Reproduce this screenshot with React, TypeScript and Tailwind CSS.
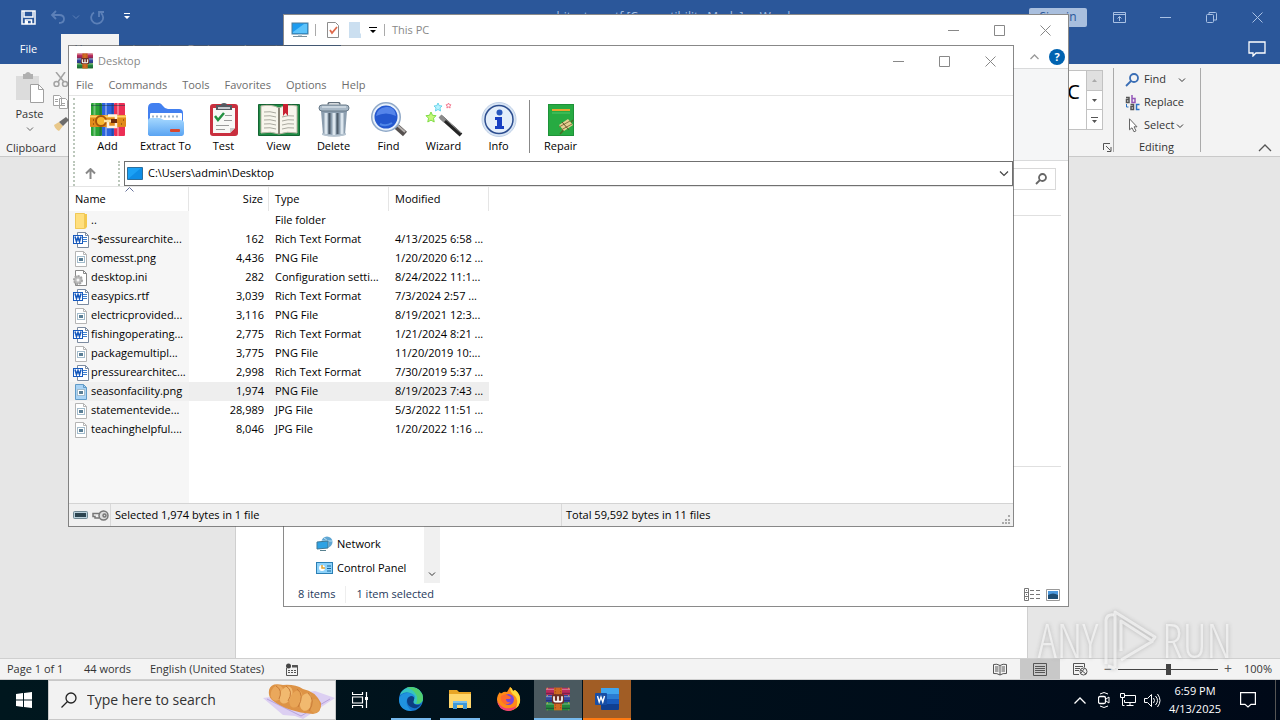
import type { ReactNode } from "react"
import { clsx } from "clsx"

type IconProps = { className?: string }
type Kind = "folder" | "rtf" | "image" | "ini"

type FileRow = {
    kind: Kind
    name: string
    size: string
    type: string
    modified: string
    selected?: boolean
}

const files: FileRow[] = [
    { kind: "folder", name: "..", size: "", type: "File folder", modified: "" },
    { kind: "rtf", name: "~$essurearchite...", size: "162", type: "Rich Text Format", modified: "4/13/2025 6:58 ..." },
    { kind: "image", name: "comesst.png", size: "4,436", type: "PNG File", modified: "1/20/2020 6:12 ..." },
    { kind: "ini", name: "desktop.ini", size: "282", type: "Configuration setti...", modified: "8/24/2022 11:1..." },
    { kind: "rtf", name: "easypics.rtf", size: "3,039", type: "Rich Text Format", modified: "7/3/2024 2:57 ..." },
    { kind: "image", name: "electricprovided...", size: "3,116", type: "PNG File", modified: "8/19/2021 12:3..." },
    { kind: "rtf", name: "fishingoperating...", size: "2,775", type: "Rich Text Format", modified: "1/21/2024 8:21 ..." },
    { kind: "image", name: "packagemultipl...", size: "3,775", type: "PNG File", modified: "11/20/2019 10:..." },
    { kind: "rtf", name: "pressurearchitec...", size: "2,998", type: "Rich Text Format", modified: "7/30/2019 5:37 ..." },
    { kind: "image", name: "seasonfacility.png", size: "1,974", type: "PNG File", modified: "8/19/2023 7:43 ...", selected: true },
    { kind: "image", name: "statementevide...", size: "28,989", type: "JPG File", modified: "5/3/2022 11:51 ..." },
    { kind: "image", name: "teachinghelpful....", size: "8,046", type: "JPG File", modified: "1/20/2022 1:16 ..." },
]

/* ---------- small shared icons ---------- */

const Chevron = ({ className }: IconProps) => (
    <svg className={className} width="8" height="6" viewBox="0 0 8 6" fill="none" stroke="currentColor">
        <path d="M1 1.500 4 4.500 7 1.500" />
    </svg>
)

const Minimize = () => (
    <svg width="11" height="11" viewBox="0 0 11 11" stroke="currentColor"><path d="M0 5.500h11" /></svg>
)
const Maximize = () => (
    <svg width="11" height="11" viewBox="0 0 11 11" fill="none" stroke="currentColor"><path d="M.5.5h10v10H.5z" /></svg>
)
const Restore = () => (
    <svg width="11" height="11" viewBox="0 0 11 11" fill="none" stroke="currentColor">
        <rect x=".5" y="2.500" width="7" height="8" rx="1" /><path d="M3 2V.5h6.500q1 0 1 1V8H8" />
    </svg>
)
const Close = () => (
    <svg width="11" height="11" viewBox="0 0 11 11" stroke="currentColor"><path d="m.5.5 10 10M10.500.5l-10 10" /></svg>
)

const WindowButtons = ({ restore }: { restore?: boolean }) => (
    <>
        <button aria-label="Minimize" className="grid h-full w-[46px] place-items-center"><Minimize /></button>
        <button aria-label="Maximize" className="grid h-full w-[46px] place-items-center">{restore ? <Restore /> : <Maximize />}</button>
        <button aria-label="Close" className="grid h-full w-[46px] place-items-center"><Close /></button>
    </>
)

const Monitor = () => (
    <svg width="18" height="16" viewBox="0 0 18 16">
        <rect x="1" y="1" width="16" height="11" fill="#1c9cf0" stroke="#4f7d99" />
        <path d="M2 10 13 2h3v9H2z" fill="#5cc3fb" />
        <path d="M7 12h4v2H7z" fill="#b7cbd6" /><path d="M2 14.500h14" stroke="#77909e" />
    </svg>
)

const WinRar = ({ size }: { size: number }) => (
    <svg width={size} height={size} viewBox="0 0 36 36">
        <rect y="1" width="36" height="11" rx="1" fill="#b92c5c" />
        <rect y="12" width="36" height="11" fill="#34489f" />
        <rect y="23" width="36" height="12" rx="1" fill="#23883c" />
        <path d="M0 3.500h36M0 14.500h36M0 25.500h36" stroke="#fff" strokeOpacity=".4" strokeWidth="1.500" />
        <path d="M0 9.500h36M0 20.500h36M0 32h36" stroke="#1d1238" strokeOpacity=".4" strokeWidth="2" />
        <path d="M2 1v34M34 1v34" stroke="#e4b94a" strokeOpacity=".7" strokeWidth="2" strokeDasharray="2 9" />
        <rect x="12" y="1" width="12" height="34" fill="#cf6a22" />
        <path d="M14 2v32M22 2v32" stroke="#893b13" strokeDasharray="2 2" />
        <rect x="9" y="11" width="18" height="14" rx="2" fill="#6e2f26" />
        <path d="M12 14v6q0 2 2 2h8q2 0 2-2v-6M18 14v7" fill="none" stroke="#fff" strokeWidth="2.500" />
    </svg>
)

const FileIcon = ({ kind, selected }: { kind: Kind; selected?: boolean }) => {
    if (kind === "folder") return (
        <svg width="18" height="18" viewBox="0 0 18 18">
            <path d="M3 1h9l1 1v15H3z" fill="#ffdf7e" /><path d="M13 2h2v13l-2 2z" fill="#f4c94e" />
            <path d="M3.500 1.500h9v15h-9z" fill="none" stroke="#efc858" />
        </svg>
    )
    if (kind === "rtf") return (
        <svg width="18" height="18" viewBox="0 0 18 18">
            <path d="M5.500 1.500h8l3 3v12h-11z" fill="#fff" stroke="#7c8ba0" /><path d="M13.500 1.500v3h3" fill="none" stroke="#7c8ba0" />
            <path d="M11 6.500h4M11 8.500h4M11 10.500h4" stroke="#3f7fcc" />
            <rect x="1.500" y="4.500" width="9" height="8" fill="#fff" stroke="#185abd" />
            <path d="m3 5.500 1.500 5L6 6.500l1.500 4 1.500-5" fill="none" stroke="#185abd" strokeWidth="1.600" />
        </svg>
    )
    if (kind === "ini") return (
        <svg width="18" height="18" viewBox="0 0 18 18">
            <path d="M3.500 1.500h8l3 3v12h-11z" fill="#fff" stroke="#878787" /><path d="M11.500 1.500v3h3" fill="none" stroke="#878787" />
            <circle cx="6" cy="11" r="4" fill="#bcbcbc" stroke="#a5a5a5" strokeDasharray="2 1" strokeWidth="2" />
            <circle cx="6" cy="11" r="1.500" fill="#f4f4f4" />
        </svg>
    )
    return (
        <svg width="18" height="18" viewBox="0 0 18 18">
            <path d="M3.500 1.500h8l3 3v12h-11z" fill={selected ? "#a9d3f5" : "#fff"} stroke={selected ? "#619bc7" : "#b5b5b5"} />
            <path d="M11.500 1.500v3h3" fill="none" stroke={selected ? "#619bc7" : "#b5b5b5"} />
            <rect x="5.500" y="6.500" width="7" height="6" fill="#fff" stroke="#a3bccc" />
            <rect x="7" y="8" width="4" height="3" fill="#5b7f96" />
        </svg>
    )
}

/* ---------- archive manager toolbar icons ---------- */

const AddIcon = () => (
    <svg width="36" height="36" viewBox="0 0 36 36">
        <rect x="1" y="1" width="11" height="33" rx="1" fill="#2aa336" />
        <rect x="12" y="1" width="12" height="33" fill="#2c63dd" />
        <rect x="24" y="1" width="11" height="33" rx="1" fill="#ec2f55" />
        <path d="M4.500 1v33M16 1v33M28 1v33" stroke="#fff" strokeOpacity=".35" strokeWidth="2" />
        <path d="M10.500 1v33M22.500 1v33" stroke="#10204a" strokeOpacity=".35" strokeWidth="2" />
        <path d="M1 3.500h11M12 3.500h12M24 3.500h11" stroke="#173a46" strokeOpacity=".5" />
        <rect y="13" width="36" height="12" rx="1" fill="#e08a1b" />
        <path d="M0 14.500h36" stroke="#ffd369" strokeWidth="2" />
        <path d="M3 18h.5M7 21h.5M3 22h.5M33 18h.5M31 22h.5" stroke="#6d3107" strokeWidth="2" />
        <circle cx="11" cy="19" r="5" fill="#f9b72f" stroke="#a75409" strokeWidth="2" />
        <path d="M18 13.500h8v4M26 21v4h-8v-5" fill="none" stroke="#fff3df" strokeWidth="2.500" />
        <path d="M14 19h11" stroke="#ffe3a2" strokeWidth="2.500" /><rect x="21" y="17" width="6" height="4" fill="#6b2c0c" />
    </svg>
)

const ExtractIcon = () => (
    <svg width="38" height="36" viewBox="0 0 38 36">
        <defs>
            <linearGradient id="pocket" x1="0" y1="0" x2="0" y2="1">
                <stop offset="0" stopColor="#a5d8ff" /><stop offset="1" stopColor="#5aa4f2" />
            </linearGradient>
        </defs>
        <path d="M1 6q0-5 5-5h6q2 0 4 3t5 3h11q4 0 4 4v20q0 3-3 3H4q-3 0-3-3z" fill="#4280f0" />
        <rect x="3" y="11" width="32" height="14" rx="1" fill="#fff" />
        <path d="M5 14.500h28" stroke="#9fb4c8" strokeWidth="2" strokeDasharray="2 2" />
        <path d="M1 19q0-3 3-3h9l4 2h16q4 0 4 3v10q0 3-3 3H4q-3 0-3-3z" fill="url(#pocket)" />
        <rect x="23" y="27" width="10" height="3" rx="1" fill="#d9472f" />
    </svg>
)

const TestIcon = () => (
    <svg width="30" height="36" viewBox="0 0 30 36">
        <rect x="1" y="2" width="28" height="32" rx="3" fill="#c92f3e" />
        <path d="M4 6h22v20l-5 5H4z" fill="#f8f8f6" /><path d="m26 26-5 5v-5z" fill="#c9c9c9" />
        <path d="M7 3h5q0-2 3-2t3 2h5v5H7z" fill="#555a61" /><path d="M9 6h12" stroke="#c7cbd0" strokeWidth="2" />
        <path d="m6 14 3 4 6-7" fill="none" stroke="#239141" strokeWidth="2.500" />
        <path d="M16 13.500h7M15 18.500h8M7 23.500h13M7 27.500h9" stroke="#9b9b9b" />
    </svg>
)

const ViewIcon = () => (
    <svg width="44" height="36" viewBox="0 0 44 36">
        <path d="M1.500 2.500h41v31h-41z" fill="#208a45" stroke="#146432" />
        <path d="M4 4q11-2 18 2v26q-8-3-18-1zM40 4q-11-2-18 2v26q8-3 18-1z" fill="#f7f5ec" stroke="#bdb8a6" />
        <path d="M22 6v26" stroke="#746f62" strokeWidth="1.500" />
        <path d="M7 10q6-1 12 1M7 14q6-1 12 1M7 18q6-1 12 1M7 22q6-1 12 1M7 26q6-1 12 1M25 15q6-2 12-1M25 19q6-2 12-1M25 23q6-2 12-1M25 27q6-2 12-1" fill="none" stroke="#aaa99f" />
        <path d="M26 2h5v12l-2.500-3-2.500 3z" fill="#c82031" />
    </svg>
)

const DeleteIcon = () => (
    <svg width="34" height="36" viewBox="0 0 34 36">
        <path d="M11 2.500q0-2 2-2h8q2 0 2 2" fill="none" stroke="#626f7b" strokeWidth="1.500" />
        <path d="M4 9h26l-2 24q-11 3-22 0z" fill="#8c9eaf" />
        <path d="M9 11v21M17 11v22M25 11v21" stroke="#dce6ee" strokeWidth="3" />
        <path d="M12.500 11v21M20.500 11v21" stroke="#4e5d6b" strokeWidth="2" />
        <path d="M5 31q12 4 24 0v2q-12 3-24 0z" fill="#b7c5d1" />
        <rect x="2" y="3" width="30" height="6" rx="3" fill="#a9b9c7" stroke="#667887" /><path d="M5 5h24" stroke="#e9f0f5" />
    </svg>
)

const FindIcon = () => (
    <svg width="38" height="36" viewBox="0 0 38 36">
        <path d="m26 24 9 8" stroke="#55504f" strokeWidth="6" /><path d="m27 23 8 7" stroke="#b5b0ae" strokeWidth="2" />
        <circle cx="16" cy="15" r="14" fill="#2458cf" stroke="#90a9c8" strokeWidth="2" />
        <circle cx="16" cy="15" r="12.500" fill="none" stroke="#e8f1fb" strokeWidth="2" />
        <path d="M6 14q1-8 10-9t10 9q-10-5-20 0z" fill="#5585ea" /><path d="M10 22q6 3 12-1" fill="none" stroke="#4f86e7" strokeWidth="2" />
    </svg>
)

const star = "m5 0 1.500 3.300L10 3.700 7.500 6.200 8.200 10 5 8.100 1.800 10l.7-3.800L0 3.700l3.500-.4z"

const WizardIcon = () => (
    <svg width="38" height="36" viewBox="0 0 38 36">
        <path d="m16 15 20 18" stroke="#252525" strokeWidth="4" /><path d="m15 14 5 5" stroke="#8b8b8b" strokeWidth="4" />
        <path d="m17 14 19 17" stroke="#8c8c8c" />
        <path d={star} transform="translate(1 10)" fill="#c6f87c" stroke="#7fdc45" />
        <path d={star} transform="translate(9 1) scale(.8)" fill="#b7f3ff" stroke="#4fcbe6" />
        <path d={star} transform="translate(21 1) scale(.5)" fill="#fff" stroke="#f4788f" strokeWidth="2" />
    </svg>
)

const InfoIcon = () => (
    <svg width="36" height="36" viewBox="0 0 36 36">
        <circle cx="18" cy="17.500" r="17" fill="#d8e5f5" stroke="#c0d0e6" /><circle cx="18" cy="17.500" r="14" fill="#e4eefa" stroke="#2c4d8f" strokeWidth="1.500" />
        <circle cx="18.500" cy="10.500" r="3" fill="#2857bd" />
        <path d="M14 15h7v9h2v3h-9v-3h2v-6h-2z" fill="#183fc2" />
    </svg>
)

const RepairIcon = () => (
    <svg width="28" height="36" viewBox="0 0 28 36">
        <rect x="1.500" y="2.500" width="25" height="31" fill="#27ab42" stroke="#1e9238" /><path d="M5 8h18" stroke="#e9a52d" strokeWidth="2" />
        <path d="M5 11h18" stroke="#53c767" />
        <path d="m26 18-13 14" stroke="#4b6a25" strokeWidth="1.500" />
        <path d="m12 23 9-6 5 6-9 6z" fill="#e5cf91" /><path d="m12 25 11-6M14 28l11-6" stroke="#8b7240" /><path d="m15 20 7 8" stroke="#604f28" />
    </svg>
)

type ToolProps = { label: string; icon: ReactNode; wide?: boolean }

const tools: ToolProps[] = [
    { label: "Add", icon: <AddIcon /> },
    { label: "Extract To", icon: <ExtractIcon />, wide: true },
    { label: "Test", icon: <TestIcon /> },
    { label: "View", icon: <ViewIcon /> },
    { label: "Delete", icon: <DeleteIcon /> },
    { label: "Find", icon: <FindIcon /> },
    { label: "Wizard", icon: <WizardIcon /> },
    { label: "Info", icon: <InfoIcon /> },
]

const Tool = ({ label, icon, wide }: ToolProps) => (
    <button className={clsx("flex flex-col items-center text-black", wide ? "w-[61px]" : "w-[55px]")}>
        {icon}
        <span className="leading-4 whitespace-nowrap">{label}</span>
    </button>
)

/* ---------- Word ---------- */

const WordTitleBar = () => (
    <header className="flex h-[34px] shrink-0 items-center bg-[#2b579a] text-[#a9c1e4]">
        <div className="flex flex-1 items-center">
            <button aria-label="Save" className="ml-[21px] text-white">
                <svg width="15" height="15" viewBox="0 0 15 15" fill="none" stroke="currentColor" strokeWidth="1.500">
                    <path d="M1 1h13v13H1zM3 1v6h9V1M4.500 14v-4h6v4" /><path d="M5 11h2v3H5z" fill="currentColor" stroke="none" />
                </svg>
            </button>
            <button aria-label="Undo" className="ml-3.5 flex items-center gap-1.5 text-[#5c80b8]">
                <svg width="16" height="14" viewBox="0 0 16 14" fill="none" stroke="currentColor" strokeWidth="1.800"><path d="M6 1 2 5l4 4M2 5h7q5 0 5 4t-5 4" /></svg>
                <Chevron />
            </button>
            <button aria-label="Redo" className="ml-2.5 text-[#5c80b8]">
                <svg width="15" height="15" viewBox="0 0 15 15" fill="none" stroke="currentColor" strokeWidth="1.800"><path d="M4 2.500A6 6 0 1 0 11 3M9 7V2h5" /></svg>
            </button>
            <button aria-label="Customize toolbar" className="ml-[18px] text-white">
                <svg width="8" height="8" viewBox="0 0 8 8" fill="currentColor"><path d="M1 0h6v1H1zM1 3h6L4 6z" /></svg>
            </button>
        </div>
        <h1 className="text-xs whitespace-pre">pressurearchitecture.rtf [Compatibility Mode]  -  Word</h1>
        <div className="flex h-full flex-1 items-center justify-end">
            <button className="flex h-[19px] w-[58px] items-center justify-center rounded-xs bg-[#a9bfde] text-xs text-[#2b579a]">Sign in</button>
            <button aria-label="Ribbon display options" className="ml-[9px] grid h-full w-[46px] place-items-center">
                <svg width="13" height="11" viewBox="0 0 13 11" fill="none" stroke="currentColor"><path d="M.5.5h12v10H.5zM1 2.500h11M6.500 9V4.500M4.500 6.500l2-2 2 2" /></svg>
            </button>
            <WindowButtons restore />
        </div>
    </header>
)

const WordTabs = () => (
    <nav className="flex h-[30px] shrink-0 items-center bg-[#2b579a] text-white">
        <button className="w-[61px] pr-1">File</button>
        <button className="h-full w-[58px] bg-[#f3f3f3] text-[#2b579a]">Home</button>
        <button className="w-[56px]">Insert</button>
        <button className="w-[60px]">Design</button>
        <button className="w-[52px]">Layout</button>
        <button aria-label="Comments" className="mr-[14px] ml-auto">
            <svg width="18" height="16" viewBox="0 0 18 16" fill="none" stroke="currentColor" strokeWidth="1.300"><path d="M1 1h16v11H8l-3 3v-3H1z" /></svg>
        </button>
    </nav>
)

const WordRibbon = () => (
    <section className="flex h-[93px] shrink-0 border-b border-[#c9c9c9] bg-[#f3f3f3] text-[#333]">
        <div className="flex w-[72px] flex-col pt-2">
            <div className="flex flex-1">
                <button className="flex w-[51px] flex-col items-center pl-2">
                    <svg width="28" height="32" viewBox="0 0 28 32">
                        <path d="M0 4h23v24H0z" fill="#dcdcdc" /><path d="M7 2h2q3-4 6 0h2v5H7z" fill="#b0b0b0" />
                        <path d="M14.500 12.500h8l5 5v13h-13z" fill="#fff" stroke="#a0a0a0" /><path d="M22.500 12.500v5h5" fill="none" stroke="#a0a0a0" />
                    </svg>
                    <span className="mt-0.5 mb-1 leading-4">Paste</span>
                    <Chevron className="text-[#666]" />
                </button>
                <div className="flex flex-col gap-2 pl-0.5">
                    <svg width="16" height="15" viewBox="0 0 16 15" fill="none" stroke="#a3a3a3" strokeWidth="1.500"><path d="m3 0 8 10M12 0 5 10" /><circle cx="3.500" cy="12" r="2.500" /><circle cx="12" cy="12" r="2.500" /></svg>
                    <svg width="16" height="14" viewBox="0 0 16 14" fill="#fff" stroke="#a3a3a3"><path d="M.5.5h6l2 2v8h-8zM6.500 3.500h6l2 2v8h-8zM2 4.500h3M2 6.500h3M8 8.500h4M8 10.500h4" /></svg>
                    <svg width="16" height="14" viewBox="0 0 16 14"><path d="m1 8 5-3 4 4-4 5q-4-2-5-6z" fill="#e9c88a" /><path d="m6 5 4 4 6-6-3-3z" fill="#6d6d6d" /></svg>
                </div>
            </div>
            <span className="pl-1.5 leading-4">Clipboard</span>
        </div>
        <div className="ml-auto flex w-[214px]">
            <div className="w-[37px] pt-1.5">
                <div className="flex h-[60px] border border-l-0 border-[#c2c2c2] bg-white">
                    <span className="flex flex-1 items-center justify-end pr-1.5 pb-4 font-['Noto_Sans'] text-xl text-black">C</span>
                    <div className="flex w-4 flex-col divide-y divide-[#c2c2c2] border-l border-[#c2c2c2] text-[#555]">
                        <button aria-label="Previous style" className="grid flex-1 place-items-center bg-[#e0e0e0] text-[#aaa]"><svg width="5" height="3" fill="currentColor"><path d="M0 3h5L2.500 0z" /></svg></button>
                        <button aria-label="Next style" className="grid flex-1 place-items-center"><svg width="5" height="3" fill="currentColor"><path d="M0 0h5L2.500 3z" /></svg></button>
                        <button aria-label="More styles" className="grid flex-1 place-items-center"><svg width="7" height="6" fill="currentColor"><path d="M0 0h7v1H0zM1 3h5L3.500 6z" /></svg></button>
                    </div>
                </div>
            </div>
            <button aria-label="Styles settings" className="mr-px mb-1 self-end">
                <svg width="9" height="9" viewBox="0 0 9 9" fill="none" stroke="#555"><path d="M.5 7V.5H7M3 3l4.500 4.500M8 4v4.500H4" /></svg>
            </button>
            <div className="my-1 flex w-[88px] flex-col border-x border-[#aaa] pl-[11px]">
                <button className="flex h-[23px] shrink-0 items-center gap-1">
                    <svg width="15" height="14" viewBox="0 0 15 14" fill="none" stroke="#3a6eb5" strokeWidth="1.800"><circle cx="9" cy="5" r="4" /><path d="m6 8-5 5" /></svg>
                    Find <Chevron className="ml-2" />
                </button>
                <button className="flex h-[23px] shrink-0 items-center gap-1">
                    <svg width="15" height="16" viewBox="0 0 15 16" fill="none" strokeWidth="1.500">
                        <path d="M1 2.500h3v5H1.500v-3H4" stroke="#555" /><path d="M7 0v7.500h3v-4H7" stroke="#9457b8" />
                        <path d="M5.500 9.500h3v5H6v-3h2.500" stroke="#555" /><path d="M14.500 9.500h-3v5h3" stroke="#2b72c4" /><path d="M1.500 9v3h2" stroke="#2b72c4" strokeWidth="1" />
                    </svg>
                    Replace
                </button>
                <button className="flex h-[23px] shrink-0 items-center gap-1">
                    <svg width="15" height="15" viewBox="0 0 15 15" fill="#fff" stroke="#666"><path d="M4.500.8v11l2.500-2 2 4 2-1-2-4h3z" /></svg>
                    Select <Chevron className="-ml-0.5" />
                </button>
                <span className="pr-3 text-center leading-5">Editing</span>
            </div>
            <button aria-label="Collapse ribbon" className="mr-2 mb-1 ml-auto self-end">
                <svg width="14" height="9" viewBox="0 0 14 9" fill="none" stroke="#555" strokeWidth="1.300"><path d="m1 8 6-6 6 6" /></svg>
            </button>
        </div>
    </section>
)

const WordStatus = () => (
    <footer className="flex h-[22px] shrink-0 items-center border-y border-[#cfcfcf] bg-[#f3f3f3] text-[#333]">
        <span className="w-[77px] pl-[7px]">Page 1 of 1</span>
        <span className="w-[66px] pl-[7px]">44 words</span>
        <span className="w-[142px] pl-[7px]">English (United States)</span>
        <svg width="14" height="13" viewBox="0 0 14 13" fill="none" stroke="#555"><path d="M1.500 5v7.500h11V2.500H7" /><path d="M7 3.500h6" strokeWidth="2" /><path d="M3 7.500h8M3 9.500h8" strokeDasharray="2 1" /><circle cx="3.500" cy="3" r="2.500" fill="#444" stroke="none" /></svg>
        <div className="ml-auto flex h-full items-center text-[#555]">
            <button aria-label="Read mode" className="grid w-10 place-items-center">
                <svg width="14" height="13" viewBox="0 0 14 13" fill="none" stroke="currentColor"><path d="M7 2.500Q4 .5.5 1.500v9q3.500-.5 6.500 1.500 3-2 6.500-1.500v-9Q10 .5 7 2.500zV12M2 4h3.500M2 6h3.500M2 8h3.500M8.500 4H12M8.500 6H12M8.500 8H12" /></svg>
            </button>
            <button aria-label="Print layout" className="grid h-full w-10 place-items-center bg-[#c8c8c8]">
                <svg width="14" height="13" viewBox="0 0 14 13" fill="none" stroke="currentColor"><path d="M.5.5h13v12H.5zM2 3.500h10M2 5.500h10M2 7.500h10M2 9.500h10" /></svg>
            </button>
            <button aria-label="Web layout" className="grid w-10 place-items-center">
                <svg width="15" height="13" viewBox="0 0 15 13" fill="none" stroke="currentColor"><path d="M6 11.500H.5V.5h11v4M2 3.500h8M2 5.500h5M2 7.500h4" /><circle cx="10.500" cy="8.500" r="3.500" /><path d="m8 7 5 4M8 10l3-4" /></svg>
            </button>
            <button aria-label="Zoom out" className="ml-0.5 w-3 text-sm leading-3">−</button>
            <input
                type="range"
                aria-label="Zoom"
                defaultValue={50}
                className="mx-1 h-4 w-[100px] appearance-none bg-[linear-gradient(#444,#444)] bg-[length:100%_1px] bg-center bg-no-repeat [&::-webkit-slider-thumb]:h-[11px] [&::-webkit-slider-thumb]:w-[5px] [&::-webkit-slider-thumb]:appearance-none [&::-webkit-slider-thumb]:bg-[#444]"
            />
            <button aria-label="Zoom in" className="w-3 text-sm leading-3">+</button>
            <span className="w-[46px] pr-2 text-right text-[#333]">100%</span>
        </div>
    </footer>
)

/* ---------- File Explorer ---------- */

const Explorer = () => (
    <section className="absolute top-3.5 right-[211px] bottom-[73px] left-[283px] flex flex-col border border-[#8a8a8a] bg-white text-black">
        <header className="flex h-[30px] shrink-0 items-center pl-[7px] text-[#888]">
            <Monitor />
            <span className="mr-2 ml-1.5 h-3 w-px bg-[#aaa]" />
            <svg className="ml-0.5" width="14" height="16" viewBox="0 0 14 16" fill="#fff" stroke="#8d8d8d"><path d="M1.500.5h8l3 3v12h-11z" /><path d="m4 8 2 3 5-6" fill="none" stroke="#df6a4c" strokeWidth="1.800" /></svg>
            <svg className="ml-2" width="14" height="16" viewBox="0 0 14 16"><path d="M1 0h11v11l1 1v4H1z" fill="#cbdff0" /></svg>
            <svg className="ml-[7px]" width="8" height="7" viewBox="0 0 8 7"><path d="M0 0h8v1H0zM1 3h6L4 6z" fill="#000" /></svg>
            <span className="mx-[7px] h-3 w-px bg-[#aaa]" />
            <span>This PC</span>
            <div className="ml-auto flex h-full"><WindowButtons /></div>
        </header>
        <nav className="flex h-[24px] shrink-0 items-center border-b border-[#d9dadb] pr-[3px]">
            <button className="h-full w-[57px] bg-[#1a5fb4] text-white">File</button>
            <button aria-label="Expand ribbon" className="ml-auto text-[#999]">
                <svg width="9" height="6" viewBox="0 0 9 6" fill="none" stroke="currentColor" strokeWidth="1.300"><path d="m.5 5 4-4 4 4" /></svg>
            </button>
            <button aria-label="Help" className="ml-2.5 grid size-4 place-items-center rounded-full bg-[#0063b1] font-bold text-white">?</button>
        </nav>
        <div className="h-[92px] shrink-0 border-b border-[#d9dadb] bg-[#f5f6f7]" />
        <div className="flex h-[35px] shrink-0 items-center justify-end pr-3">
            <label className="flex h-[22px] w-[150px] items-center border border-[#d9d9d9] pr-2">
                <input aria-label="Search This PC" className="min-w-0 flex-1 outline-none" />
                <svg width="12" height="12" viewBox="0 0 12 12" fill="none" stroke="#666" strokeWidth="1.800"><circle cx="7.500" cy="4.500" r="3.500" /><path d="m5 7-4 4" /></svg>
            </label>
        </div>
        <div className="flex min-h-0 flex-1">
            <ul className="flex w-[140px] flex-col justify-end pb-[3px] pl-8">
                <li className="flex h-6 items-center gap-1">
                    <svg width="17" height="16" viewBox="0 0 17 16"><circle cx="11" cy="6" r="5.500" fill="#5fa6d3" /><path d="M8 2q6 3 4 9M6 5h10" fill="none" stroke="#c2e2f4" /><path d="m1 6 11-1v7L1 13z" fill="#2ea2e4" stroke="#3f7895" /><path d="M4 14.500h6" stroke="#58818f" /></svg>
                    Network
                </li>
                <li className="flex h-6 items-center gap-1">
                    <svg width="17" height="14" viewBox="0 0 17 14"><rect x=".5" y="1.500" width="16" height="11" fill="#8dd2fa" stroke="#2b7fb4" /><circle cx="6" cy="7" r="3" fill="#fff" /><path d="M6 4v3h3" stroke="#e0a32f" strokeWidth="1.500" fill="none" /><path d="M11 5h4M11 7.500h4M11 10h4" stroke="#1768a1" /></svg>
                    Control Panel
                </li>
            </ul>
            <div className="flex w-4 items-end justify-center bg-[#f0f0f0] pb-1.5">
                <Chevron className="text-[#333]" />
            </div>
            <div className="flex-1 pt-[19px] pr-[7px]">
                <div className="h-[251px] border-t border-[#e0e0e0]" />
                <div className="border-t border-[#e0e0e0]" />
            </div>
        </div>
        <footer className="flex h-[23px] shrink-0 items-center pr-2 pl-3.5 text-[#1e395b]">
            <span>8 items</span>
            <span className="ml-2.5 border-l border-[#eee] pl-2.5">1 item selected</span>
            <div className="ml-auto flex gap-1.5">
                <button aria-label="Details view">
                    <svg width="16" height="13" viewBox="0 0 16 13" fill="none" stroke="#777"><path d="M.5.5h4v12h-4zM.5 4.500h4M.5 8.500h4M2 2.500h1M2 6.500h1M2 10.500h1" /><path d="M6 2.500h10M6 6.500h10M6 10.500h10" strokeDasharray="4 2" /></svg>
                </button>
                <button aria-label="Large icons view">
                    <svg width="14" height="12" viewBox="0 0 14 12"><path d="M.5.5h13v11H.5z" fill="#fff" stroke="#999" /><path d="M2 2h10v8H2z" fill="#4b98dd" /><path d="M2 6q5-3 10 0v4H2z" fill="#1e4d73" /></svg>
                </button>
            </div>
        </footer>
    </section>
)

/* ---------- WinRAR ---------- */

const Archiver = () => (
    <section className="absolute top-[45px] right-[266px] bottom-[153px] left-[68px] flex flex-col border border-[#555]/70 bg-white bg-clip-padding text-black">
        <header className="flex h-[30px] shrink-0 items-center pl-2 text-[#888]">
            <WinRar size={16} />
            <h2 className="ml-[5px]">Desktop</h2>
            <div className="ml-auto flex h-full"><WindowButtons /></div>
        </header>
        <nav className="flex h-5 shrink-0 items-center gap-[15px] border-b border-[#e4e4e4] pl-[7px] text-[#6d6d6d]">
            {["File", "Commands", "Tools", "Favorites", "Options", "Help"].map(item => <button key={item}>{item}</button>)}
        </nav>
        <div className="flex h-[61px] shrink-0 pt-0.5 pl-1">
            <span className="mr-[5px] border-l-2 border-dotted border-[#bcc8bc]" />
            <div className="flex items-start pt-1">
                {tools.map(tool => <Tool key={tool.label} {...tool} />)}
            </div>
            <span className="mx-[3px] mt-0.5 mb-1 w-px bg-[#888]" />
            <div className="flex items-start pt-1">
                <Tool label="Repair" icon={<RepairIcon />} />
            </div>
        </div>
        <div className="flex h-[30px] shrink-0 items-stretch border-b border-[#e4e4e4] pt-1 pl-1">
            <span className="border-l-2 border-dotted border-[#bcc8bc]" />
            <button aria-label="Up one level" className="grid w-[31px] place-items-center text-[#888]">
                <svg width="11" height="12" viewBox="0 0 11 12" fill="none" stroke="currentColor" strokeWidth="2"><path d="M5.500 11V1M1 5.500 5.500 1 10 5.500" /></svg>
            </button>
            <span className="mr-1 ml-auto border-l-2 border-dotted border-[#bcc8bc]" />
            <label className="grid w-[calc(100%-51px)] items-center">
                <select aria-label="Address" className="col-start-1 row-start-1 h-[25px] appearance-none border border-[#707070] bg-white pl-[23px] outline-none">
                    <option>C:\Users\admin\Desktop</option>
                </select>
                <svg className="pointer-events-none col-start-1 row-start-1 ml-[3px]" width="16" height="13" viewBox="0 0 16 13"><path d="M.5.5h15v12H.5z" fill="#1ba1f5" stroke="#2c6f9e" /><path d="M1 12 14 1h1v11z" fill="#0e8de6" /></svg>
                <svg className="pointer-events-none col-start-1 row-start-1 mr-1 justify-self-end" width="10" height="7" viewBox="0 0 10 7" fill="none" stroke="#444" strokeWidth="1.200"><path d="m1 1.500 4 4 4-4" /></svg>
            </label>
        </div>
        <div className="min-h-0 flex-1">
            <table className="h-full w-[420px] table-fixed border-separate border-spacing-0 text-left">
                <thead>
                    <tr className="h-6 [&>th]:border-r [&>th]:border-[#e5e5e5] [&>th]:p-0 [&>th]:font-normal">
                        <th className="w-[120px]">
                            <span className="relative block pl-1.5">
                                Name
                                <svg className="absolute -top-1 left-14" width="9" height="5" viewBox="0 0 9 5" fill="none" stroke="#66709a"><path d="m.5 4.500 4-4 4 4" /></svg>
                            </span>
                        </th>
                        <th className="w-20"><span className="block pr-[5px] text-right">Size</span></th>
                        <th className="w-[120px]"><span className="pl-1.5">Type</span></th>
                        <th className="w-[100px]"><span className="pl-1.5">Modified</span></th>
                    </tr>
                </thead>
                <tbody>
                    {files.map(file => (
                        <tr key={file.name} className={clsx("h-[19px] whitespace-nowrap [&>td]:p-0", file.selected && "bg-[#eee]")}>
                            <td className={file.selected ? "bg-[#f0f0f0]" : "bg-[#f6f6f6]"}>
                                <span className="flex h-[19px] items-center pl-[3px]">
                                    <FileIcon kind={file.kind} selected={file.selected} />
                                    <span className="pl-px">{file.name}</span>
                                </span>
                            </td>
                            <td><span className="block pr-[5px] text-right">{file.size}</span></td>
                            <td><span className="pl-1.5">{file.type}</span></td>
                            <td><span className="pl-1.5">{file.modified}</span></td>
                        </tr>
                    ))}
                    <tr><td className="bg-[#f6f6f6]" /><td colSpan={3} /></tr>
                </tbody>
            </table>
        </div>
        <footer className="flex h-[23px] shrink-0 items-center border-t border-[#d4d4d4] bg-[#f0f0f0]">
            <div className="flex h-full w-[42px] items-center gap-1 border-r border-[#d9d9d9] pl-1">
                <svg width="15" height="8" viewBox="0 0 15 8"><rect x=".5" y=".5" width="14" height="7" rx="1" fill="#b9cfda" stroke="#6f8792" /><rect x="2" y="2" width="11" height="4" fill="#2c4450" /></svg>
                <svg width="17" height="11" viewBox="0 0 17 11" fill="none" stroke="#777" strokeWidth="1.500"><circle cx="11.500" cy="5.500" r="4.500" fill="#ddd" /><circle cx="12.500" cy="5.500" r="1.500" /><path d="M7 3.500H1v3h2V8h4" /></svg>
            </div>
            <span className="w-[450px] pl-1">Selected 1,974 bytes in 1 file</span>
            <span className="flex h-full flex-1 items-center border-l border-[#d9d9d9] pl-1">Total 59,592 bytes in 11 files</span>
            <svg className="mr-0.5 self-end" width="10" height="11" viewBox="0 0 10 11" fill="#aaa"><path d="M7 0h2v2H7zM7 4h2v2H7zM4 4h2v2H4zM7 7h2v2H7zM4 7h2v2H4zM1 7h2v2H1z" /></svg>
        </footer>
    </section>
)

/* ---------- taskbar ---------- */

const Bread = () => (
    <svg width="72" height="38" viewBox="0 0 72 38">
        <path d="m0 17 20 17 12 1 8 3 32-21-20-7z" fill="#dccff2" /><path d="m4 18 34 17 29-17" fill="none" stroke="#b6a2dc" />
        <path d="M6 9Q8 1 20 4q12-1 20 4 12 2 18 14 1 10-8 11-26-2-41-14-4-4-3-10z" fill="#dd9346" />
        <ellipse cx="14" cy="12" rx="6" ry="8" fill="#eaa85c" transform="rotate(25 14 12)" />
        <ellipse cx="23" cy="14" rx="6" ry="9" fill="#f1b96f" transform="rotate(25 23 14)" />
        <ellipse cx="33" cy="18" rx="6" ry="9" fill="#e8a556" transform="rotate(25 33 18)" />
        <ellipse cx="43" cy="21" rx="6" ry="9" fill="#f1b96f" transform="rotate(15 43 21)" />
        <ellipse cx="52" cy="25" rx="5" ry="7" fill="#e29e50" />
        <path d="M13 5q7 4 3 13M23 5q8 5 2 15M34 8q8 6 1 18M45 12q8 7 1 18" fill="none" stroke="#c87b38" />
    </svg>
)

const EdgeIcon = () => (
    <svg width="24" height="24" viewBox="0 0 24 24">
        <circle cx="12" cy="12" r="12" fill="#1676cf" />
        <path d="M1 8Q4 0 13 0q10 1 11 11 0 6-7 6-4 0-3-3 3-4-1-7Q7 3 1 8z" fill="#36c5c0" />
        <path d="M12 0q11 1 12 11 0 6-7 6 3-6-1-11T7 1q2-1 5-1z" fill="#50cf70" />
        <path d="M0 12Q2 5 10 6q7 1 6 6-1-3-5-2-5 2-3 8 2 4 5 6Q0 24 0 12z" fill="#2093df" />
        <path d="M8 14q0-4 4-5 4 0 3 4-2 4 3 5 2 0 4-1-3 5-8 4-6-2-6-7z" fill="#0c3f83" />
    </svg>
)

const FolderIcon = () => (
    <svg width="22" height="20" viewBox="0 0 22 20">
        <path d="M0 1h8l2 2h12v16H0z" fill="#e8a526" /><path d="M0 5h22v14H0z" fill="#ffd66b" />
        <path d="M4 12h14v8h-4v-4H8v4H4z" fill="#3f98d8" /><path d="M4 12h14v2H4z" fill="#7cc0ec" />
    </svg>
)

const FirefoxIcon = () => (
    <svg width="24" height="24" viewBox="0 0 24 24">
        <path d="M3 5q0 2 2 1 2-2 5-1l3-5q2 1 3 4l2-1q6 4 5 12-2 8-11 9Q1 23 0 13q0-5 3-8z" fill="#ff8a16" />
        <path d="M13 0q2 1 3 4l2-1q6 4 5 12-1 4-4 6 3-8-1-12-5-3-5-9z" fill="#ffd83b" />
        <path d="M0 13q2 6 8 8 8 1 12-3-3 6-9 6Q1 23 0 13z" fill="#ef3f78" />
        <circle cx="11.500" cy="12.500" r="5.500" fill="#7945d8" /><path d="M4 9q4-3 8 0 3 1 1 3H9q0 4 5 3-4 4-8 1-3-3-2-7z" fill="#ff6a2d" />
    </svg>
)

const WordIcon = () => (
    <svg width="24" height="22" viewBox="0 0 24 22">
        <path d="M6 0h17q1 0 1 1v5H6z" fill="#41a5ee" /><path d="M6 6h18v5H6z" fill="#2b7cd3" /><path d="M6 11h18v5H6z" fill="#185abd" /><path d="M6 16h18v5q0 1-1 1H7q-1 0-1-1z" fill="#103f91" />
        <rect y="5" width="12" height="12" rx="1" fill="#174ea6" /><path d="m2.500 8 1.700 6L6 9l1.800 5 1.700-6" fill="none" stroke="#fff" strokeWidth="1.400" />
    </svg>
)

const apps: { label: string; icon: ReactNode; className: string }[] = [
    { label: "Microsoft Edge", icon: <EdgeIcon />, className: "mx-1 w-10 border-[#76b9ed]" },
    { label: "File Explorer", icon: <FolderIcon />, className: "mx-1 w-10 border-[#76b9ed]" },
    { label: "Firefox", icon: <FirefoxIcon />, className: "mx-1 w-10 border-transparent" },
    { label: "WinRAR", icon: <WinRar size={24} />, className: "w-12 border-[#76b9ed] bg-[#4a595f]" },
    { label: "Word", icon: <WordIcon />, className: "w-12 border-[#ff7a12] bg-[#a15d25]" },
]

const Taskbar = () => (
    <footer className="flex h-10 shrink-0 items-stretch bg-linear-to-r from-[#00171e] to-[#000918] text-white">
        <button aria-label="Start" className="grid w-12 place-items-center">
            <svg width="16" height="16" viewBox="0 0 16 16" fill="#fff"><path d="m0 2 7-1v6.500H0zM8 .9 16 0v7.500H8zM0 8.500h7V15l-7-1zM8 8.500h8V16l-8-1.100z" /></svg>
        </button>
        <label className="flex w-72 items-center border border-[#c8c8c8] bg-[#f2f2f2] pl-3">
            <svg width="16" height="16" viewBox="0 0 16 16" fill="none" stroke="#222" strokeWidth="1.300"><circle cx="10" cy="6" r="5" /><path d="m6.500 9.500-6 6" /></svg>
            <input aria-label="Search" placeholder="Type here to search" className="ml-2.5 min-w-0 flex-1 text-sm outline-none placeholder:text-[#333]" />
            <Bread />
        </label>
        <button aria-label="Task view" className="mr-[3px] grid w-12 place-items-center">
            <svg width="16" height="16" viewBox="0 0 16 16" fill="none" stroke="#fff" strokeWidth="1.200"><path d="M.5 0v2.500h10V0M.5 5h10v6H.5zM.5 16v-2.500h10V16M14.500 0v16" /><path d="M14.500 5v3" strokeWidth="3" /></svg>
        </button>
        <div className="flex gap-px">
            {apps.map(app => (
                <button key={app.label} aria-label={app.label} className={clsx("grid place-items-center border-b-2", app.className)}>{app.icon}</button>
            ))}
        </div>
        <div className="ml-auto flex items-center">
            <button aria-label="Hidden icons" className="grid w-6 place-items-center"><svg width="12" height="7" viewBox="0 0 12 7" fill="none" stroke="#fff" strokeWidth="1.300"><path d="m.5 6.500 5.500-5.500 5.500 5.500" /></svg></button>
            <button aria-label="Meet now" className="grid w-6 place-items-center"><svg width="12" height="16" viewBox="0 0 12 16" fill="none" stroke="#fff"><rect x=".5" y="4.500" width="7" height="7" rx="1.500" strokeWidth="1.300" /><path d="m8 7 3-2v6L8 9M2 2q4-3 8 0M2 14q4 3 8 0" /></svg></button>
            <button aria-label="Network" className="grid w-6 place-items-center"><svg width="16" height="14" viewBox="0 0 16 14" fill="none" stroke="#fff"><path d="M5 2.500h10.500v7H4.500V7M10 9.500v3M6.500 12.500h7M.5.500h4v4h-4zM2.500 4.500v8h2" /></svg></button>
            <button aria-label="Volume" className="grid w-6 place-items-center"><svg width="17" height="15" viewBox="0 0 17 15" fill="none" stroke="#fff"><path d="M.5 5.500h3l4-4v12l-4-4h-3zM9.500 5q2 2.500 0 5M11.500 3q4 4.500 0 9M13.500 1q5 6.500 0 13" /></svg></button>
            <time className="w-[62px] text-center leading-[18px]">6:59 PM<br />4/13/2025</time>
            <button aria-label="Notifications" className="mr-1 grid h-full w-[50px] place-items-center border-r border-[#555] pr-1.5"><svg width="16" height="16" viewBox="0 0 16 16" fill="none" stroke="#fff" strokeWidth="1.200"><path d="M.6.6h14.800v11.800H11L8 15l-3-2.600H.6z" /></svg></button>
        </div>
    </footer>
)

const Watermark = () => (
    <div className="pointer-events-none absolute right-12 bottom-12 flex items-center gap-1 font-['Open_Sans_Condensed_Light','Open_Sans_Condensed',Roboto,sans-serif] text-5xl font-light text-white/60 drop-shadow-[0_0_2px_#999]">
        ANY
        <svg width="56" height="64" viewBox="0 0 56 64" fill="none" stroke="currentColor" strokeWidth="3" strokeLinejoin="round">
            <path d="M12 7q-7-1-8 5v44" /><path d="M13 60V4l40 25-3 4-31-20v30M19 52l32-19M13 60l-7-2" />
        </svg>
        RUN
    </div>
)

export default function App() {
    return (
        <main className="relative flex h-screen flex-col overflow-hidden font-['Open_Sans','Noto_Sans',sans-serif] text-[11px]">
            <div className="relative flex min-h-0 flex-1 flex-col">
                <WordTitleBar />
                <WordTabs />
                <WordRibbon />
                <div className="flex min-h-0 flex-1 bg-[#e6e6e6] pr-[252px] pl-[235px]">
                    <div className="flex-1 border-x border-[#cfcfcf] bg-white" />
                </div>
                <WordStatus />
                <Explorer />
                <Archiver />
            </div>
            <Taskbar />
            <Watermark />
        </main>
    )
}
